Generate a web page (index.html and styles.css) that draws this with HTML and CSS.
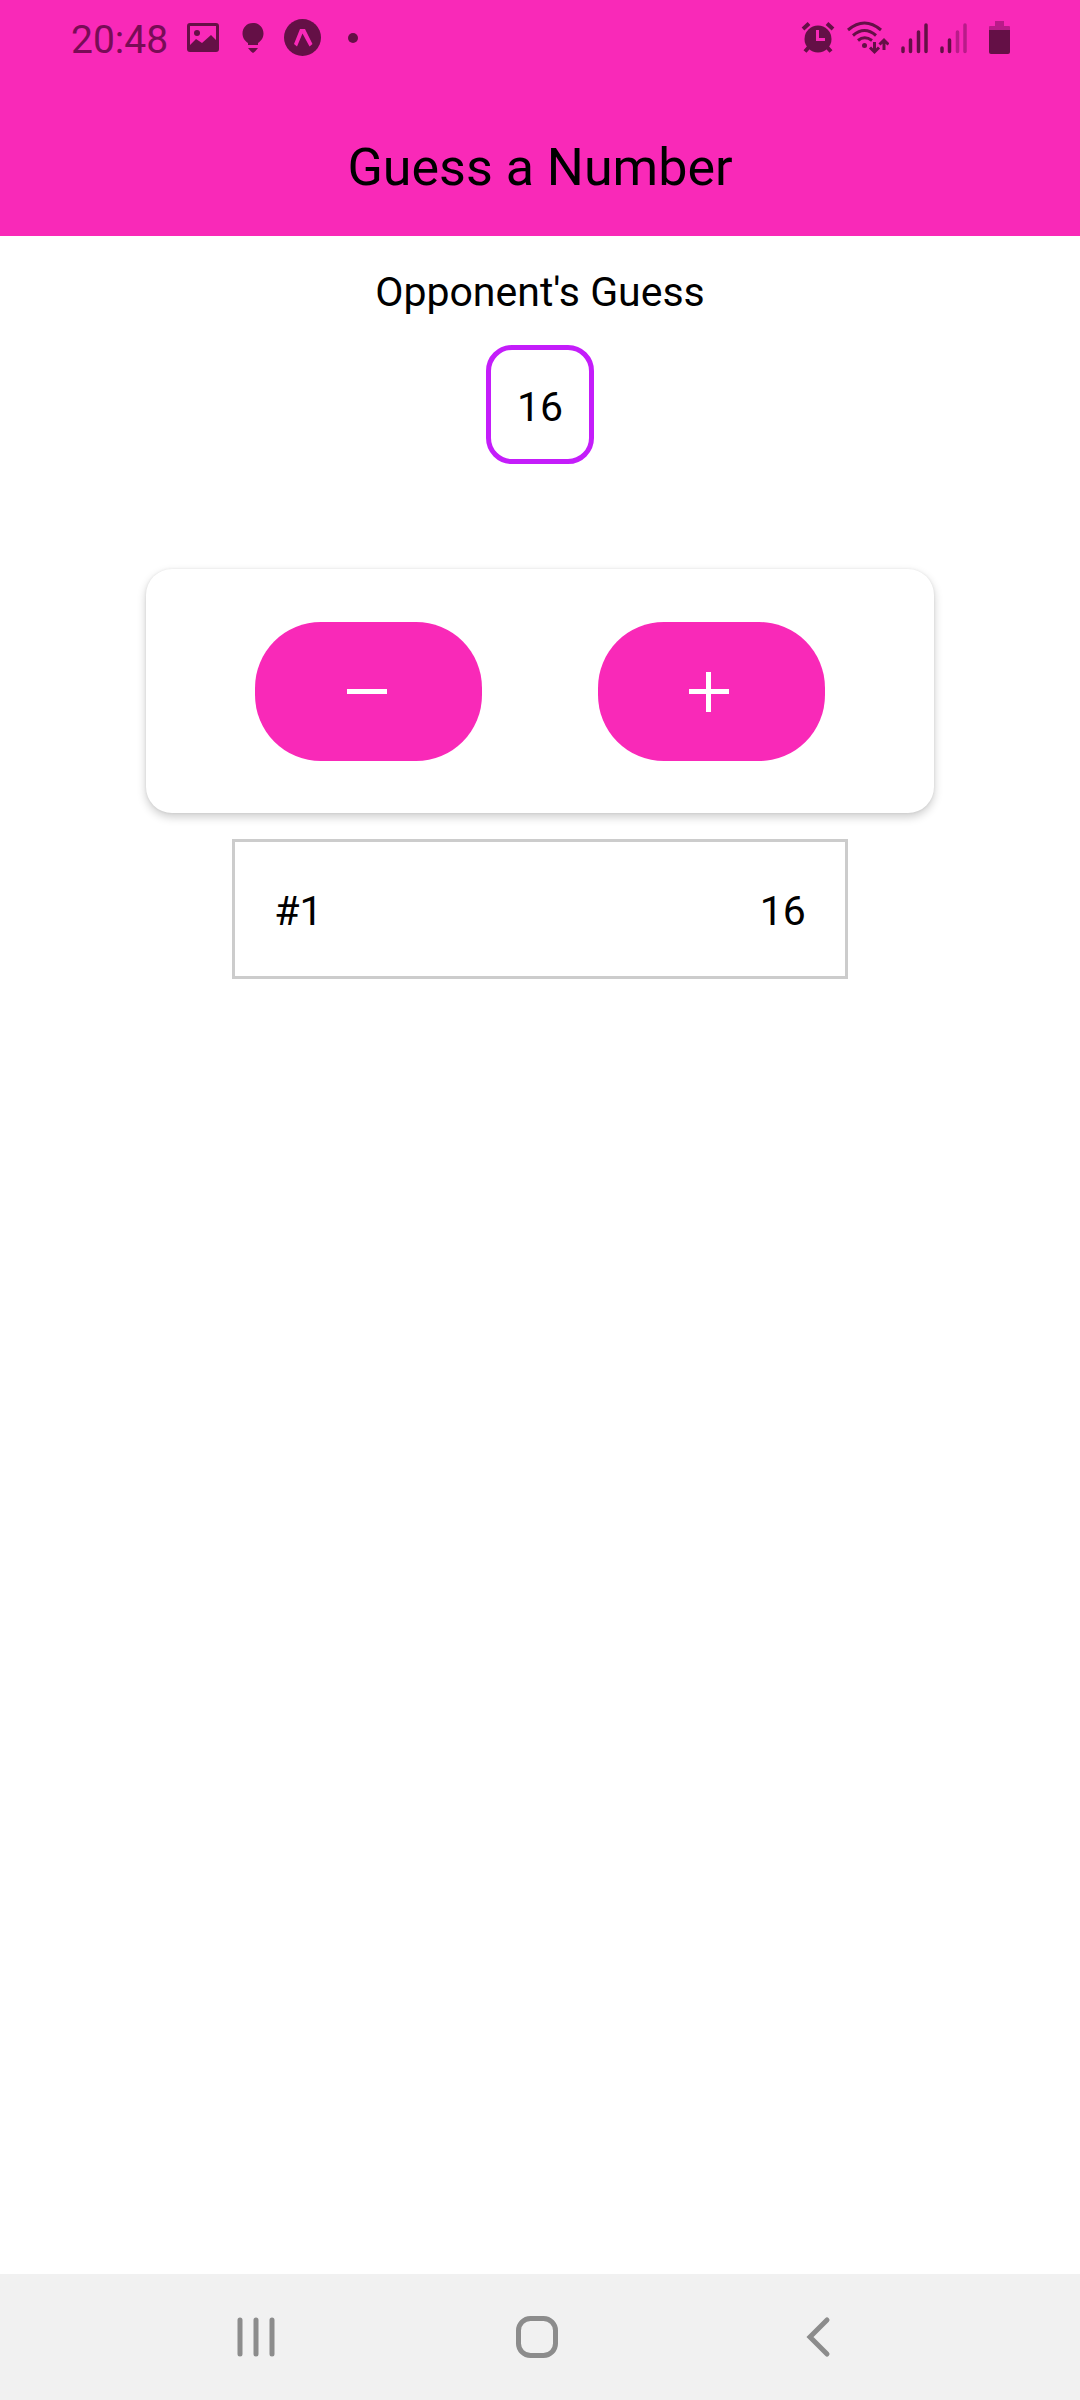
FILE: index.html
```html
<!DOCTYPE html>
<html lang="en">
<head>
  <meta charset="utf-8">
  <meta name="viewport" content="width=device-width, initial-scale=1">
  <title>Guess a Number</title>
  <link rel="stylesheet" href="styles.css">
</head>
<body>
  <div class="screen">
    <header class="header">
      <div class="status">
        <div class="status-group">
          <time class="clock">20:48</time>
          <svg class="icon-image" width="32" height="40" viewBox="0 0 32 40" aria-hidden="true">
            <path fill="currentColor" fill-rule="evenodd" d="M3 5H29Q32 5 32 8V31Q32 34 29 34H3Q0 34 0 31V8Q0 5 3 5ZM3 8V27L9 21L15 25L24 17L29 22V8Z"/>
            <circle cx="10" cy="15" r="3" fill="currentColor"/>
          </svg>
          <svg class="icon-bulb" width="22" height="40" viewBox="0 0 22 40" aria-hidden="true">
            <path fill="currentColor" d="M11 5C4.500 5 .5 10 .5 15.500C.5 20 3 23 6 25V27H16V25C19 23 21.500 20 21.500 15.500C21.500 10 17.500 5 11 5ZM6 30H16L13 33.500L11 35L9 33.500Z"/>
          </svg>
          <svg class="icon-expo" width="37" height="40" viewBox="0 0 37 40" aria-hidden="true">
            <circle cx="18.500" cy="19.500" r="18.500" fill="currentColor"/>
            <path fill="#f929b8" d="M16 11H21L28.500 26L25.500 28.500L18.500 15.500L13 28.500L10 26Z"/>
          </svg>
          <svg class="icon-dot" width="10" height="40" viewBox="0 0 10 40" aria-hidden="true">
            <circle cx="5" cy="20" r="5" fill="currentColor"/>
          </svg>
        </div>
        <div class="status-group">
          <svg class="icon-alarm" width="34" height="40" viewBox="0 0 34 40" aria-hidden="true">
            <circle cx="17" cy="21" r="13.500" fill="currentColor"/>
            <path fill="none" stroke="currentColor" stroke-width="4" d="M2 11L8 5.500M32 11L26 5.500M8 29L4 33.500M26 29L30 33.500"/>
            <path fill="none" stroke="#f929b8" stroke-width="3" d="M16.500 12V21.500H24"/>
          </svg>
          <svg class="icon-wifi" width="42" height="40" viewBox="0 0 42 40" aria-hidden="true">
            <g fill="none" stroke="currentColor" stroke-width="3">
              <path d="M1 12Q17.500-2 34 12M6 17.500Q17.500 7.500 29 17.500M11 22.500Q17.500 17 25 22.500"/>
              <path d="M27.500 24V33M23 29.500L27.500 34L32 29.500M37 32V23M32.500 26.500L37 22L41.500 26.500"/>
            </g>
            <circle cx="17.500" cy="27.500" r="2.500" fill="currentColor"/>
          </svg>
          <svg class="icon-signal" width="27" height="40" viewBox="0 0 27 40" aria-hidden="true">
            <path fill="none" stroke="currentColor" stroke-width="3.500" stroke-linecap="round" d="M2 30V33.500M9.500 22V33.500M17.500 14V33.500M25 7V33.500"/>
          </svg>
          <svg class="icon-signal" width="27" height="40" viewBox="0 0 27 40" aria-hidden="true">
            <path fill="none" stroke="currentColor" stroke-width="3.500" stroke-linecap="round" d="M2 30V33.500M9.500 22V33.500"/>
            <path fill="none" stroke="#b91b89" stroke-width="3.500" stroke-linecap="round" d="M17.500 14V33.500M25 7V33.500"/>
          </svg>
          <svg class="icon-battery" width="21" height="40" viewBox="0 0 21 40" aria-hidden="true">
            <path fill="#b91b89" d="M6 3H15V8H20Q21 8 21 9V13H0V9Q0 8 1 8H6Z"/>
            <path fill="currentColor" d="M0 12H21V34Q21 36 19 36H2Q0 36 0 34Z"/>
          </svg>
        </div>
      </div>
      <h1 class="title">Guess a Number</h1>
    </header>

    <main class="game">
      <h2 class="label">Opponent's Guess</h2>
      <output class="guess">16</output>
      <div class="card">
        <button class="hint" type="button" aria-label="Lower">
          <svg width="44" height="40" viewBox="0 0 44 40" aria-hidden="true"><path fill="#fff" d="M0 17H40V22H0Z"/></svg>
        </button>
        <button class="hint" type="button" aria-label="Greater">
          <svg width="44" height="40" viewBox="0 0 44 40" aria-hidden="true"><path fill="#fff" d="M0 17H17V0H22V17H40V22H22V40H17V22H0Z"/></svg>
        </button>
      </div>
      <ol class="rounds">
        <li class="round"><span>#1</span><span>16</span></li>
      </ol>
    </main>

    <nav class="navbar" aria-label="System">
      <button class="nav-button" type="button" aria-label="Recent apps">
        <svg width="42" height="42" viewBox="0 0 42 42" aria-hidden="true"><path fill="none" stroke="currentColor" stroke-width="5" stroke-linecap="round" d="M5 4V38M21 4V38M37 4V38"/></svg>
      </button>
      <button class="nav-button" type="button" aria-label="Home">
        <svg width="42" height="42" viewBox="0 0 42 42" aria-hidden="true"><rect x="2.500" y="2.500" width="37" height="37" rx="12" fill="none" stroke="currentColor" stroke-width="5"/></svg>
      </button>
      <button class="nav-button" type="button" aria-label="Back">
        <svg width="42" height="42" viewBox="0 0 42 42" aria-hidden="true"><path fill="none" stroke="currentColor" stroke-width="5" stroke-linecap="round" d="M30 4L13 21L30 38"/></svg>
      </button>
    </nav>
  </div>
</body>
</html>
```
FILE: styles.css
```css
* {
  box-sizing: border-box;
}

body {
  margin: 0;
  background: #fff;
  color: #000;
  font-family: Roboto, sans-serif;
  font-size: 41px;
  line-height: 50px;
}

button {
  border: 0;
  padding: 0;
  cursor: pointer;
}

svg {
  display: block;
  flex: none;
}

.screen {
  display: flex;
  flex-direction: column;
  min-height: 100vh;
}

.header {
  background: #f929b8;
  padding-bottom: 37px;
}

.status {
  display: flex;
  justify-content: space-between;
  padding: 18px 70px 0 71px;
  color: #641046;
}

.status-group {
  display: flex;
  height: 40px;
}

.clock {
  font-size: 39px;
  line-height: 44px;
  color: #780c56;
}

.icon-image {
  margin-left: 19px;
}

.icon-bulb {
  margin-left: 23px;
}

.icon-expo {
  margin-left: 20px;
}

.icon-dot {
  margin-left: 27px;
}

.icon-wifi,
.icon-signal {
  margin-left: 12px;
}

.icon-battery {
  margin-left: 22px;
}

.title {
  margin: 79px 0 0;
  font-size: 52px;
  line-height: 62px;
  font-weight: 400;
  text-align: center;
}

.game {
  flex: 1;
  display: flex;
  flex-direction: column;
  align-items: center;
  padding-top: 31px;
}

.label {
  margin: 0;
  font-size: 41px;
  font-weight: 400;
}

.guess {
  margin-top: 28px;
  padding: 32px 26px 27px;
  border: 5px solid #c41dfa;
  border-radius: 26px;
}

.card {
  display: flex;
  justify-content: space-around;
  width: 73%;
  margin-top: 105px;
  padding: 53px 52px 52px;
  border-radius: 26px;
  background: #fff;
  box-shadow: 0 4px 10px rgba(0, 0, 0, 0.2), 0 0 3px rgba(0, 0, 0, 0.08);
}

.hint {
  display: flex;
  align-items: center;
  justify-content: center;
  width: 227px;
  height: 139px;
  border-radius: 66px;
  background: #f929b8;
}

.rounds {
  width: 57%;
  margin: 26px 0;
  padding: 0;
  list-style: none;
}

.round {
  display: flex;
  justify-content: space-between;
  padding: 44px 39px 40px;
  border: 3px solid #ccc;
}

.navbar {
  display: flex;
  justify-content: center;
  height: 126px;
  padding-right: 6px;
  background: #f1f1f1;
}

.nav-button {
  display: flex;
  align-items: center;
  justify-content: center;
  width: 281px;
  background: none;
  color: #8c8c8c;
}
```
